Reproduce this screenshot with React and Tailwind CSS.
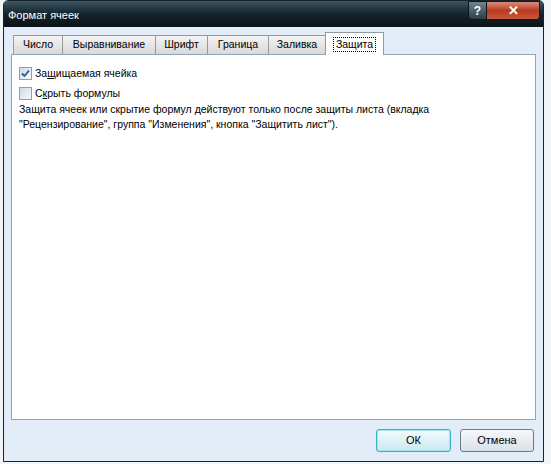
import { useState } from 'react';

const tabs = [
  { label: 'Число', w: 'w-[50px]' },
  { label: 'Выравнивание', w: 'w-[94px]' },
  { label: 'Шрифт', w: 'w-[53px]' },
  { label: 'Граница', w: 'w-[62px]' },
  { label: 'Заливка', w: 'w-[58px]' },
];

const Checkbox = ({ checked, onChange }) => (
  <button
    onClick={onChange}
    className="flex h-[13px] w-[13px] items-center justify-center border border-[#8e9fb3] bg-gradient-to-br from-[#cfdae7] to-[#f7f9fb] p-0"
  >
    {checked && (
      <svg width="9" height="9" viewBox="0 0 9 9">
        <path d="M1 4.5 L3.5 7 L8 1.5" fill="none" stroke="#2c56a8" strokeWidth="1.8" />
      </svg>
    )}
  </button>
);

const App = () => {
  const [locked, setLocked] = useState(true);
  const [hidden, setHidden] = useState(false);

  return (
    <div className="h-[464px] w-[551px] overflow-hidden bg-[#f2f5f8] pl-[3px] font-['Liberation_Sans',Arial,sans-serif] text-[10.5px] text-black">
      <div className="flex h-[462px] w-[541px] flex-col overflow-hidden rounded-t-[5px] border border-[#17232b] bg-[#e3edf8]">
        <div className="flex h-[26px] items-start justify-between bg-gradient-to-b from-[#3b5766] via-[#15242c] to-[#0a1318] pl-[4px] pr-[3px]">
          <span className="mt-[8px] text-[11px] leading-[13px] text-white">Формат ячеек</span>
          <div className="flex">
            <div className="flex h-[19px] w-[19px] items-center justify-center rounded-bl-[4px] border border-[#0c1418] bg-gradient-to-b from-[#6e8795] to-[#2c3e48] text-[12px] font-bold text-white">?</div>
            <div className="flex h-[19px] w-[53px] items-center justify-center rounded-br-[4px] border border-l-0 border-[#3a0c08] bg-gradient-to-b from-[#d98a78] via-[#b93a22] to-[#c85a3a] text-[13px] font-bold text-white">✕</div>
          </div>
        </div>

        <div className="flex flex-1 flex-col px-[7px]">
          <div className="flex h-[27px] items-end pl-[2px] pt-[5px]">
            {tabs.map((t) => (
              <div
                key={t.label}
                className={`${t.w} flex h-[19px] items-center justify-center border border-b-0 border-[#919b9c] bg-gradient-to-b from-[#f3f3f3] to-[#d9d9d9] -mr-px`}
              >
                {t.label}
              </div>
            ))}
            <div className="relative z-10 -mb-px flex h-[23px] w-[59px] items-center justify-center border border-b-0 border-[#919b9c] bg-white">
              <span className="border border-dotted border-black px-[2px] leading-[13px]">Защита</span>
            </div>
          </div>

          <div className="h-[366px] border border-[#8fa5bb] bg-white pl-[7px] pt-[12px]">
            <label className="flex h-[13px] items-center gap-[3px]">
              <Checkbox checked={locked} onChange={() => setLocked(!locked)} />
              <span>
                За<u>щ</u>ищаемая ячейка
              </span>
            </label>
            <label className="mt-[7px] flex h-[13px] items-center gap-[3px]">
              <Checkbox checked={hidden} onChange={() => setHidden(!hidden)} />
              <span>
                С<u>к</u>рыть формулы
              </span>
            </label>
            <p className="mt-[2px] leading-[15px]">
              Защита ячеек или скрытие формул действуют только после защиты листа (вкладка
              <br />
              "Рецензирование", группа "Изменения", кнопка "Защитить лист").
            </p>
          </div>

          <div className="flex justify-end gap-[9px] pr-[2px] pt-[9px]">
            <button className="h-[23px] w-[75px] rounded-[3px] border border-[#3ab4c6] bg-gradient-to-b from-[#f2fbfd] to-[#c9e9f0] text-[11px] shadow-[inset_0_0_0_1px_#a6e3ec]">
              ОК
            </button>
            <button className="h-[23px] w-[74px] rounded-[3px] border border-[#707a86] bg-gradient-to-b from-[#f6f8fa] to-[#d8e1ea] text-[11px]">
              Отмена
            </button>
          </div>
        </div>
      </div>
    </div>
  );
};

export default App;
